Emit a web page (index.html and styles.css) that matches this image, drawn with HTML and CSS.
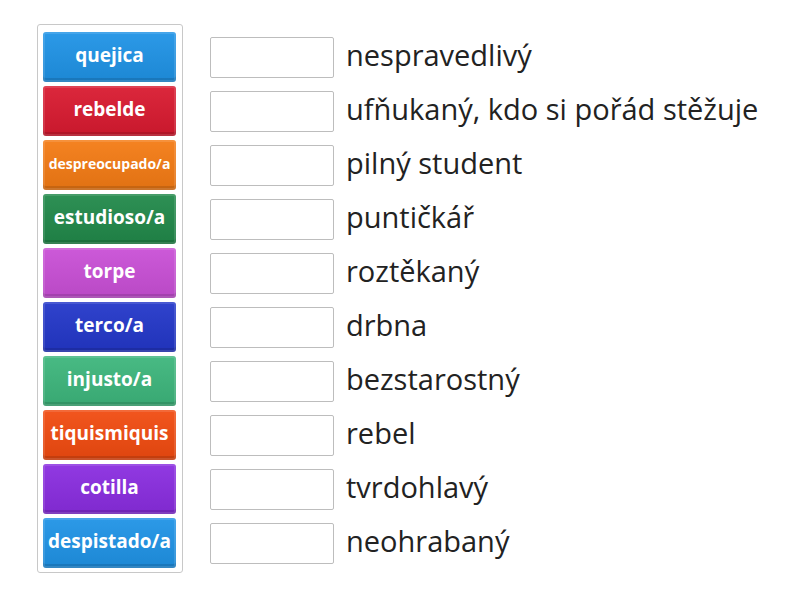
FILE: index.html
```html
<!DOCTYPE html>
<html>
<head>
    <link rel="stylesheet" href="styles.css">
</head>
<body>
    <main class="board">
        <div class="tiles">
            <div class="tile blue">quejica</div>
            <div class="tile red">rebelde</div>
            <div class="tile orange small">despreocupado/a</div>
            <div class="tile green">estudioso/a</div>
            <div class="tile pink">torpe</div>
            <div class="tile navy">terco/a</div>
            <div class="tile mint">injusto/a</div>
            <div class="tile vermilion">tiquismiquis</div>
            <div class="tile violet">cotilla</div>
            <div class="tile blue">despistado/a</div>
        </div>
        <div class="rows">
            <div class="row"><div class="slot"></div><span class="clue">nespravedlivý</span></div>
            <div class="row"><div class="slot"></div><span class="clue">ufňukaný, kdo si pořád stěžuje</span></div>
            <div class="row"><div class="slot"></div><span class="clue">pilný student</span></div>
            <div class="row"><div class="slot"></div><span class="clue">puntičkář</span></div>
            <div class="row"><div class="slot"></div><span class="clue">roztěkaný</span></div>
            <div class="row"><div class="slot"></div><span class="clue">drbna</span></div>
            <div class="row"><div class="slot"></div><span class="clue">bezstarostný</span></div>
            <div class="row"><div class="slot"></div><span class="clue">rebel</span></div>
            <div class="row"><div class="slot"></div><span class="clue">tvrdohlavý</span></div>
            <div class="row"><div class="slot"></div><span class="clue">neohrabaný</span></div>
        </div>
    </main>
</body>
</html>
```
FILE: styles.css
```css
* {
    box-sizing: border-box;
}

html, body {
    margin: 0;
    padding: 0;
    background-color: #fff;
    font-family: "Open Sans", Arial, sans-serif;
    color: #222;
}

body {
    padding: 24px 0 0 37px;
}

.board {
    display: flex;
    align-items: flex-start;
    gap: 27px;
}

.tiles {
    display: flex;
    flex-direction: column;
    gap: 4px;
    padding: 7px 6px 4px 5px;
    border: 1px solid #c8c8c8;
    border-radius: 3px;
}

.tile {
    width: 133px;
    height: 50px;
    padding-bottom: 4px;
    display: flex;
    align-items: center;
    justify-content: center;
    border-radius: 3px;
    color: #fff;
    font-weight: 700;
    font-size: 19px;
    white-space: nowrap;
    background-image: linear-gradient(rgba(255,255,255,0.06), rgba(0,0,0,0.08));
    box-shadow: inset 0 0 0 2px rgba(255,255,255,0.12), inset 0 -4px 0 rgba(0,0,0,0.12);
}

.tile.small {
    font-size: 14px;
}

.blue { background-color: #1f93e6; }
.red { background-color: #d91a30; }
.orange { background-color: #f47b14; }
.green { background-color: #21894a; }
.pink { background-color: #c94fd6; }
.navy { background-color: #2337c9; }
.mint { background-color: #3db67c; }
.vermilion { background-color: #f14b10; }
.violet { background-color: #8a2de0; }

.rows {
    display: flex;
    flex-direction: column;
    gap: 4px;
    margin-top: 8px;
}

.row {
    height: 50px;
    display: flex;
    align-items: center;
    gap: 12px;
}

.slot {
    width: 124px;
    height: 41px;
    border: 1px solid #bdbdbd;
    border-radius: 2px;
    background: #fff;
}

.clue {
    font-size: 29px;
    padding-bottom: 6px;
    white-space: nowrap;
}
```
